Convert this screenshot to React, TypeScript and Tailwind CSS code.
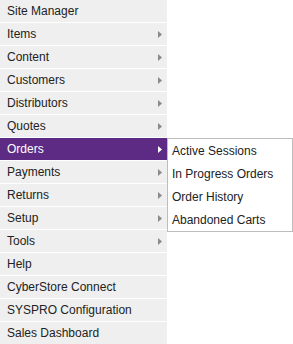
const items: { label: string; sub?: boolean; active?: boolean }[] = [
  { label: 'Site Manager' },
  { label: 'Items', sub: true },
  { label: 'Content', sub: true },
  { label: 'Customers', sub: true },
  { label: 'Distributors', sub: true },
  { label: 'Quotes', sub: true },
  { label: 'Orders', sub: true, active: true },
  { label: 'Payments', sub: true },
  { label: 'Returns', sub: true },
  { label: 'Setup', sub: true },
  { label: 'Tools', sub: true },
  { label: 'Help' },
  { label: 'CyberStore Connect' },
  { label: 'SYSPRO Configuration' },
  { label: 'Sales Dashboard' },
]

const subItems = ['Active Sessions', 'In Progress Orders', 'Order History', 'Abandoned Carts']

function Arrow({ active }: { active?: boolean }) {
  return (
    <svg width="4" height="7" viewBox="0 0 4 7" className="shrink-0">
      <path d="M0 0 L4 3.5 L0 7 Z" fill={active ? '#ffffff' : '#8a8a8a'} />
    </svg>
  )
}

export default function App() {
  return (
    <div className="min-h-screen bg-white font-['Liberation_Sans',Arial,sans-serif] text-[12px]">
      <ul className="w-[167px]">
        {items.map((item) => (
          <li key={item.label} className="relative">
            <div
              className={
                item.active
                  ? 'flex h-[23px] items-center justify-between border-b border-white bg-[#5e2b84] pl-[7px] pr-[5px] text-white'
                  : 'flex h-[23px] items-center justify-between border-b border-white bg-[#efefef] pl-[7px] pr-[5px] text-[#222]'
              }
            >
              <span>{item.label}</span>
              {item.sub && <Arrow active={item.active} />}
            </div>
            {item.active && (
              <ul className="absolute left-[167px] top-0 w-[126px] border border-[#bdbdbd] bg-white">
                {subItems.map((s) => (
                  <li key={s} className="flex h-[23px] items-center pl-[4px] text-[#222]">
                    {s}
                  </li>
                ))}
              </ul>
            )}
          </li>
        ))}
      </ul>
    </div>
  )
}
